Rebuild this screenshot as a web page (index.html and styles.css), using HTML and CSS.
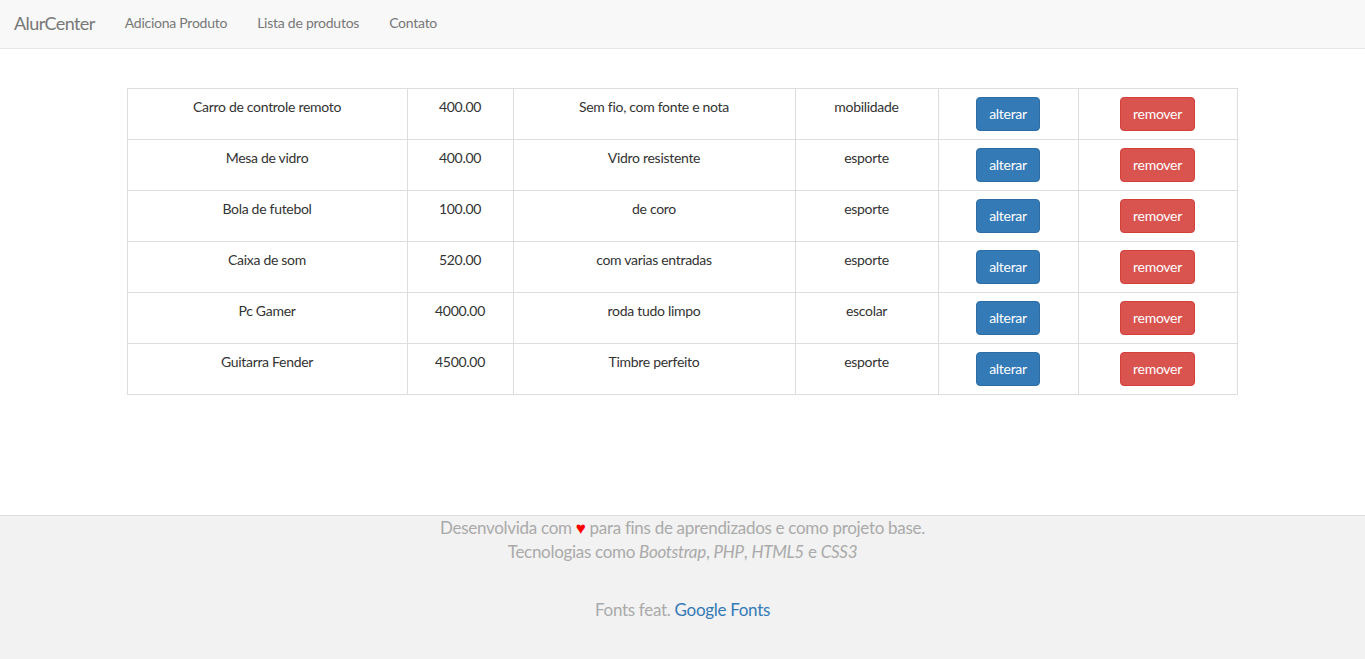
FILE: index.html
```html
<!DOCTYPE html>
<html lang="pt-BR">
<head>
<meta charset="utf-8">
<title>AlurCenter</title>
<link rel="stylesheet" href="styles.css">
</head>
<body>
<nav class="navbar">
  <a class="brand" href="#">AlurCenter</a>
  <ul class="nav">
    <li><a href="#">Adiciona Produto</a></li>
    <li><a href="#">Lista de produtos</a></li>
    <li><a href="#">Contato</a></li>
  </ul>
</nav>
<main class="main">
  <table class="table">
    <colgroup>
      <col class="c1"><col class="c2"><col class="c3"><col class="c4"><col class="c5"><col class="c6">
    </colgroup>
    <tbody>
      <tr><td>Carro de controle remoto</td><td>400.00</td><td>Sem fio, com fonte e nota</td><td>mobilidade</td><td><button class="btn btn-primary">alterar</button></td><td><button class="btn btn-danger">remover</button></td></tr>
      <tr><td>Mesa de vidro</td><td>400.00</td><td>Vidro resistente</td><td>esporte</td><td><button class="btn btn-primary">alterar</button></td><td><button class="btn btn-danger">remover</button></td></tr>
      <tr><td>Bola de futebol</td><td>100.00</td><td>de coro</td><td>esporte</td><td><button class="btn btn-primary">alterar</button></td><td><button class="btn btn-danger">remover</button></td></tr>
      <tr><td>Caixa de som</td><td>520.00</td><td>com varias entradas</td><td>esporte</td><td><button class="btn btn-primary">alterar</button></td><td><button class="btn btn-danger">remover</button></td></tr>
      <tr><td>Pc Gamer</td><td>4000.00</td><td>roda tudo limpo</td><td>escolar</td><td><button class="btn btn-primary">alterar</button></td><td><button class="btn btn-danger">remover</button></td></tr>
      <tr><td>Guitarra Fender</td><td>4500.00</td><td>Timbre perfeito</td><td>esporte</td><td><button class="btn btn-primary">alterar</button></td><td><button class="btn btn-danger">remover</button></td></tr>
    </tbody>
  </table>
</main>
<footer class="footer">
  <p class="credits">Desenvolvida com <span class="heart">♥</span> para fins de aprendizados e como projeto base.<br>Tecnologias como <em>Bootstrap</em>, <em>PHP</em>, <em>HTML5</em> e <em>CSS3</em></p>
  <p class="fonts">Fonts feat. <a href="#">Google Fonts</a></p>
</footer>
</body>
</html>
```
FILE: styles.css
```css
* { box-sizing: border-box; }
html, body { margin: 0; padding: 0; }
body {
  font-family: Lato, "Open Sans", sans-serif;
  font-size: 14px;
  line-height: 20px;
  color: #333;
  background: #fff;
  display: flex;
  flex-direction: column;
  min-height: 659px;
}
.navbar {
  height: 49px;
  padding-bottom: 2px;
  background: #f8f8f8;
  border-bottom: 1px solid #e7e7e7;
  display: flex;
  align-items: center;
}
.brand {
  padding: 0 15px 0 14px;
  font-size: 18px;
  color: #777;
  text-decoration: none;
  letter-spacing: -0.6px;
}
.nav {
  list-style: none;
  margin: 0;
  padding: 0;
  display: flex;
}
.nav a {
  display: block;
  padding: 0 15px;
  color: #777;
  text-decoration: none;
  font-size: 14px;
  letter-spacing: -0.25px;
}
.main {
  padding: 39px 1px 0 0;
  height: 466px;
  display: flex;
  justify-content: center;
}
.table {
  width: 1110px;
  height: 307px;
  table-layout: fixed;
  border-collapse: collapse;
  border: 1px solid #ddd;
}
.c1 { width: 280px; }
.c2 { width: 106px; }
.c3 { width: 282px; }
.c4 { width: 143px; }
.c5 { width: 140px; }
.c6 { width: 159px; }
.table td {
  border: 1px solid #ddd;
  padding: 8px;
  height: 51px;
  text-align: center;
  vertical-align: top;
  letter-spacing: -0.3px;
}
.btn {
  font-family: inherit;
  font-size: 14px;
  line-height: 20px;
  padding: 6px 12px;
  height: 34px;
  border-radius: 4px;
  border: 1px solid transparent;
  color: #fff;
  cursor: pointer;
  letter-spacing: -0.3px;
}
.btn-primary { background: #337ab7; border-color: #2e6da4; }
.btn-danger { background: #d9534f; border-color: #d43f3a; }
.footer {
  flex: 1;
  background: #f2f2f2;
  border-top: 1px solid #ddd;
  text-align: center;
  color: #aaa;
  font-size: 17px;
  line-height: 24px;
  letter-spacing: -0.3px;
}
.credits { margin: 0; }
.heart { color: red; }
.footer em { font-style: italic; }
.fonts { margin: 34px 0 0; }
.fonts a { color: #337ab7; text-decoration: none; }
```
